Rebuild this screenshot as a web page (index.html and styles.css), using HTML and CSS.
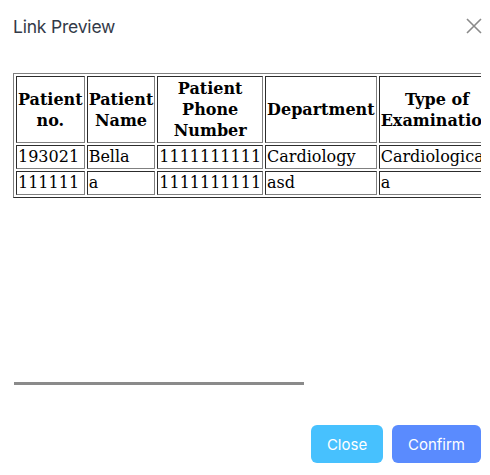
FILE: index.html
```html
<!DOCTYPE html>
<html>
<head>
<meta charset="utf-8">
<link rel="stylesheet" href="styles.css">
</head>
<body>
<div class="dialog">
  <div class="header">
    <div class="title">Link Preview</div>
    <button class="close-x" aria-label="close">
      <svg width="16" height="16" viewBox="0 0 16 16"><path d="M1 1 L15 15 M15 1 L1 15" stroke="#8a8a8a" stroke-width="1.6" fill="none"/></svg>
    </button>
  </div>
  <div class="body">
    <div class="scroller">
      <table class="data" border="1">
        <tr><th>Patient<br>no.</th><th>Patient<br>Name</th><th>Patient<br>Phone<br>Number</th><th>Department</th><th>Type of<br>Examination</th><th>Date</th></tr>
        <tr><td>193021</td><td>Bella</td><td>1111111111</td><td>Cardiology</td><td>Cardiological</td><td>2023-01-01</td></tr>
        <tr><td>111111</td><td>a</td><td>1111111111</td><td>asd</td><td>a</td><td>2023-01-01</td></tr>
      </table>
    </div>
    <div class="track"><div class="thumb"></div></div>
  </div>
  <div class="footer">
    <button class="btn btn-close">Close</button>
    <button class="btn btn-confirm">Confirm</button>
  </div>
</div>
</body>
</html>
```
FILE: styles.css
```css
html, body { margin: 0; padding: 0; background: #fff; }
.dialog { width: 490px; height: 475px; display: flex; flex-direction: column; box-sizing: border-box; }
.header { display: flex; align-items: center; justify-content: space-between; padding: 15px 8px 0 13px; height: 22px; }
.title { font-family: Inter, "Noto Sans", sans-serif; font-size: 17.5px; color: #333a48; letter-spacing: -0.2px; }
.close-x { border: none; background: none; padding: 0; width: 16px; height: 16px; display: flex; }
.body { padding: 36px 9px 0 13px; }
.scroller { overflow: hidden; height: 309px; }
.data { font-family: "DejaVu Serif", serif; font-size: 16px; line-height: 20px; color: #000; white-space: nowrap; }
.data td { padding: 1px; }
.data th { padding: 1px; line-height: 21px; }
.track { height: 3px; width: 100%; }
.thumb { width: 290px; height: 3px; margin-left: 1px; background: #8a8a8a; }
.footer { display: flex; justify-content: flex-end; gap: 9px; padding: 40px 9px 0 0; }
.btn { border: none; border-radius: 6px; height: 38px; color: #fff; font-family: Inter, "Noto Sans", sans-serif; font-size: 15px; }
.btn-close { width: 72px; background: #47c1fe; }
.btn-confirm { width: 89px; background: #5a8bfe; }
```
